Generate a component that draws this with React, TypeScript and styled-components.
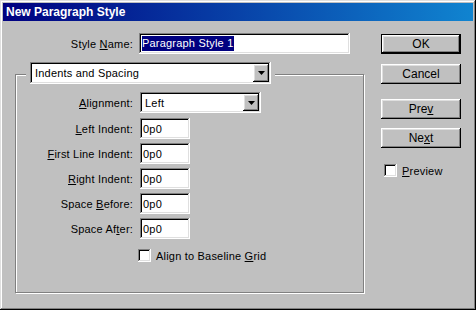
import React from 'react';
import styled, { createGlobalStyle } from 'styled-components';

const GlobalStyle = createGlobalStyle`
  html, body {
    margin: 0;
    padding: 0;
    background: #c0c0c0;
  }
  body {
    font-family: "Liberation Sans", Arial, sans-serif;
    font-size: 11px;
  }
`;

const raisedShadow = 'inset -1px -1px #000, inset 1px 1px #fff, inset -2px -2px #808080, inset 2px 2px #dfdfdf';
const sunkenShadow = 'inset -1px -1px #fff, inset 1px 1px #808080, inset -2px -2px #dfdfdf, inset 2px 2px #000';

const Dialog = styled.div`
  width: 476px;
  height: 310px;
  box-sizing: border-box;
  padding: 3px;
  background: #c0c0c0;
  box-shadow: inset -1px -1px #000, inset 1px 1px #dfdfdf, inset -2px -2px #808080, inset 2px 2px #fff;
  display: flex;
  flex-direction: column;
  color: #000;
  letter-spacing: 0.2px;
`;

const TitleBar = styled.div`
  height: 18px;
  background: linear-gradient(90deg, #000080, #1084d0);
  color: #fff;
  font-weight: bold;
  font-size: 12px;
  letter-spacing: 0;
  display: flex;
  align-items: center;
  padding-left: 3px;
`;

const Body = styled.div`
  display: flex;
  gap: 17px;
  padding-left: 12px;
`;

const LeftColumn = styled.div`
  width: 349px;
  display: flex;
  flex-direction: column;
`;

const RightColumn = styled.div`
  width: 80px;
  margin-top: 13px;
  display: flex;
  flex-direction: column;
`;

const Row = styled.div<{ $gapBelow?: number }>`
  display: flex;
  align-items: center;
  height: 21px;
  margin-bottom: ${(p) => p.$gapBelow ?? 0}px;
`;

const NameRow = styled(Row)`
  margin-top: 12px;
  gap: 6px;
`;

const Label = styled.label<{ $width: number }>`
  width: ${(p) => p.$width}px;
  text-align: right;
  white-space: nowrap;
`;

const Key = styled.span`
  text-decoration: underline;
  text-underline-offset: 1px;
`;

const TextBox = styled.div<{ $width: number }>`
  width: ${(p) => p.$width}px;
  height: 21px;
  box-sizing: border-box;
  padding: 0 3px;
  background: #fff;
  box-shadow: ${sunkenShadow};
  display: flex;
  align-items: center;
  white-space: nowrap;
`;

const Selected = styled.span`
  background: #000080;
  color: #fff;
  line-height: 15px;
  padding-right: 1px;
`;

const Group = styled.div`
  margin-top: 8px;
  display: flex;
  flex-direction: column;
`;

const GroupHeader = styled.div`
  position: relative;
  z-index: 1;
  align-self: flex-start;
  margin-left: 11px;
  padding: 0 4px;
  background: #c0c0c0;
`;

const GroupFrame = styled.div`
  margin-top: -10px;
  height: 219px;
  box-sizing: border-box;
  border: 1px solid #808080;
  box-shadow: inset 1px 1px #fff, 1px 1px #fff;
  padding-top: 17px;
  display: flex;
  flex-direction: column;
  gap: 4px;
`;

const FieldRow = styled(Row)`
  gap: 7px;
`;

const SelectBox = styled.div<{ $width: number; $height: number }>`
  width: ${(p) => p.$width}px;
  height: ${(p) => p.$height}px;
  box-sizing: border-box;
  padding: 2px;
  background: #fff;
  box-shadow: ${sunkenShadow};
  display: flex;
  align-items: stretch;
`;

const SelectText = styled.div`
  flex: 1;
  padding-left: 3px;
  display: flex;
  align-items: center;
  white-space: nowrap;
`;

const ArrowButton = styled.div`
  width: 16px;
  background: #c0c0c0;
  box-shadow: ${raisedShadow};
  display: flex;
  align-items: center;
  justify-content: center;
`;

const CheckRow = styled.div<{ $indent: number; $top: number }>`
  display: flex;
  align-items: center;
  gap: 5px;
  height: 13px;
  margin-left: ${(p) => p.$indent}px;
  margin-top: ${(p) => p.$top}px;
`;

const CheckBox = styled.div`
  width: 13px;
  height: 13px;
  box-sizing: border-box;
  background: #fff;
  box-shadow: ${sunkenShadow};
  flex: none;
`;

const Button = styled.div<{ $top?: number; $default?: boolean }>`
  height: 20px;
  margin-top: ${(p) => p.$top ?? 0}px;
  box-sizing: border-box;
  background: #c0c0c0;
  box-shadow: ${(p) =>
    p.$default
      ? `inset 0 0 0 1px #000, inset -2px -2px #000, inset 2px 2px #fff, inset -3px -3px #808080, inset 3px 3px #dfdfdf`
      : raisedShadow};
  display: flex;
  align-items: center;
  justify-content: center;
  font-size: 12px;
  letter-spacing: 0;
`;

function Select({ value, width, height }: { value: string; width: number; height: number }) {
  return (
    <SelectBox $width={width} $height={height}>
      <SelectText>{value}</SelectText>
      <ArrowButton>
        <svg width="7" height="4" viewBox="0 0 7 4">
          <polygon points="0,0 7,0 3.5,4" fill="#000" />
        </svg>
      </ArrowButton>
    </SelectBox>
  );
}

const fields: { before: string; key: string; after: string }[] = [
  { before: '', key: 'L', after: 'eft Indent:' },
  { before: '', key: 'F', after: 'irst Line Indent:' },
  { before: '', key: 'R', after: 'ight Indent:' },
  { before: 'Space ', key: 'B', after: 'efore:' },
  { before: 'Space Af', key: 't', after: 'er:' },
];

export default function App() {
  return (
    <>
      <GlobalStyle />
      <Dialog>
        <TitleBar>New Paragraph Style</TitleBar>
        <Body>
          <LeftColumn>
            <NameRow>
              <Label $width={118}>
                Style <Key>N</Key>ame:
              </Label>
              <TextBox $width={211}>
                <Selected>Paragraph Style 1</Selected>
              </TextBox>
            </NameRow>

            <Group>
              <GroupHeader>
                <Select value="Indents and Spacing" width={241} height={22} />
              </GroupHeader>
              <GroupFrame>
                <FieldRow $gapBelow={1}>
                  <Label $width={117}>
                    <Key>A</Key>lignment:
                  </Label>
                  <Select value="Left" width={121} height={21} />
                </FieldRow>
                {fields.map((f) => (
                  <FieldRow key={f.after}>
                    <Label $width={117}>
                      {f.before}
                      <Key>{f.key}</Key>
                      {f.after}
                    </Label>
                    <TextBox $width={50}>0p0</TextBox>
                  </FieldRow>
                ))}
                <CheckRow $indent={122} $top={6}>
                  <CheckBox />
                  <span>
                    Align to Baseline <Key>G</Key>rid
                  </span>
                </CheckRow>
              </GroupFrame>
            </Group>
          </LeftColumn>

          <RightColumn>
            <Button $default>OK</Button>
            <Button $top={10}>Cancel</Button>
            <Button $top={15}>
              Pre<Key>v</Key>
            </Button>
            <Button $top={9}>
              Ne<Key>x</Key>t
            </Button>
            <CheckRow $indent={3} $top={16}>
              <CheckBox />
              <span>
                <Key>P</Key>review
              </span>
            </CheckRow>
          </RightColumn>
        </Body>
      </Dialog>
    </>
  );
}
